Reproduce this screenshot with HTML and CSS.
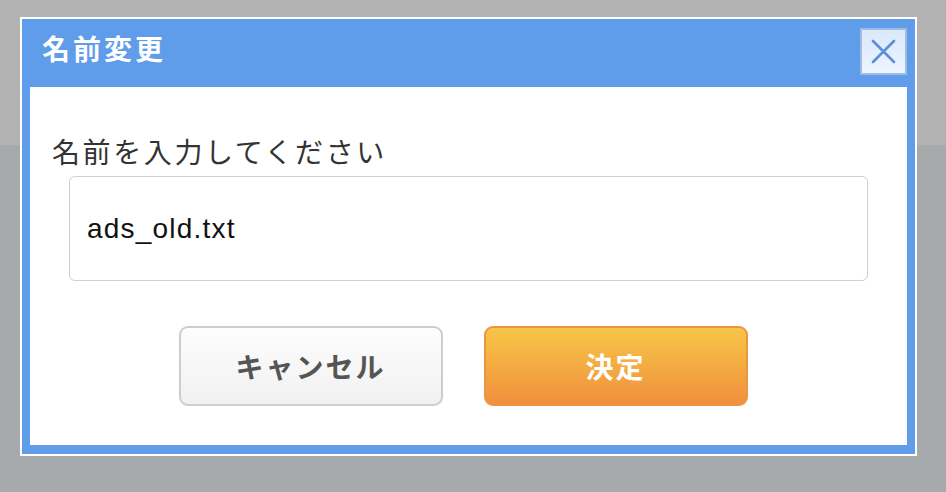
FILE: index.html
```html
<!DOCTYPE html>
<html lang="ja">
<head>
<meta charset="utf-8">
<title>名前変更</title>
<link rel="stylesheet" href="styles.css">
</head>
<body>
<div class="screen">
  <div class="dialog">
    <div class="header">
      <h1 class="title">名前変更</h1>
      <button class="close" type="button" aria-label="閉じる">
        <svg width="25" height="25" viewBox="0 0 25 25"><path d="M2 2 L23 23 M23 2 L2 23" stroke="#5b90d8" stroke-width="2.6" stroke-linecap="round" fill="none"/></svg>
      </button>
    </div>
    <div class="body">
      <div class="label">名前を入力してください</div>
      <div class="input">ads_old.txt</div>
      <div class="actions">
        <button class="btn btn-cancel" type="button">キャンセル</button>
        <button class="btn btn-ok" type="button">決定</button>
      </div>
    </div>
  </div>
</div>
</body>
</html>
```
FILE: styles.css
```css
html, body {
  margin: 0;
  padding: 0;
}
body {
  font-family: "Noto Sans CJK JP", "Noto Sans", sans-serif;
}
.screen {
  width: 946px;
  height: 492px;
  box-sizing: border-box;
  padding: 17px 0 0 20px;
  background: linear-gradient(to bottom, #b3b3b3 0, #b3b3b3 145px, #a6aaad 145px, #a6aaad 100%);
  overflow: hidden;
}
.dialog {
  width: 897px;
  height: 439px;
  box-sizing: border-box;
  border: 2px solid #ffffff;
  background: #5f9cea;
  display: flex;
  flex-direction: column;
}
.header {
  height: 68px;
  display: flex;
  justify-content: space-between;
  align-items: flex-start;
  padding: 0 8px 0 20px;
}
.title {
  margin: 12px 0 0 0;
  font-size: 28px;
  line-height: 34px;
  font-weight: 700;
  color: #ffffff;
  letter-spacing: 3px;
}
.close {
  margin-top: 9px;
  width: 47px;
  height: 47px;
  box-sizing: border-box;
  border: 2px solid #9dbbe4;
  background: linear-gradient(to bottom, #d9e8fb, #eef5fe);
  padding: 0;
  display: flex;
  align-items: center;
  justify-content: center;
}
.body {
  margin: 0 8px 9px 8px;
  height: 358px;
  background: #ffffff;
  box-sizing: border-box;
  padding: 47px 0 0 0;
}
.label {
  margin-left: 22px;
  font-size: 28px;
  line-height: 34px;
  color: #333333;
  letter-spacing: 2.6px;
}
.input {
  margin: 8px 39px 0 39px;
  height: 105px;
  box-sizing: border-box;
  border: 1.5px solid #cfcfcf;
  border-radius: 6px;
  padding-left: 17px;
  display: flex;
  align-items: center;
  font-family: "Liberation Sans", "Noto Sans CJK JP", sans-serif;
  font-size: 28px;
  letter-spacing: 1.2px;
  color: #111111;
}
.actions {
  margin-top: 45px;
  display: flex;
  justify-content: center;
  gap: 41px;
  padding-right: 11px;
}
.btn {
  width: 264px;
  height: 80px;
  box-sizing: border-box;
  border-radius: 9px;
  font-family: "Noto Sans CJK JP", sans-serif;
  font-size: 28px;
  font-weight: 700;
  letter-spacing: 2px;
  padding: 0;
}
.btn-cancel {
  border: 2px solid #cdcdcd;
  background: linear-gradient(to bottom, #fdfdfd, #f1f1f1);
  color: #555555;
}
.btn-ok {
  border: 2px solid #eb9541;
  background: linear-gradient(to bottom, #f7c646, #f0903e);
  color: #ffffff;
}
```
